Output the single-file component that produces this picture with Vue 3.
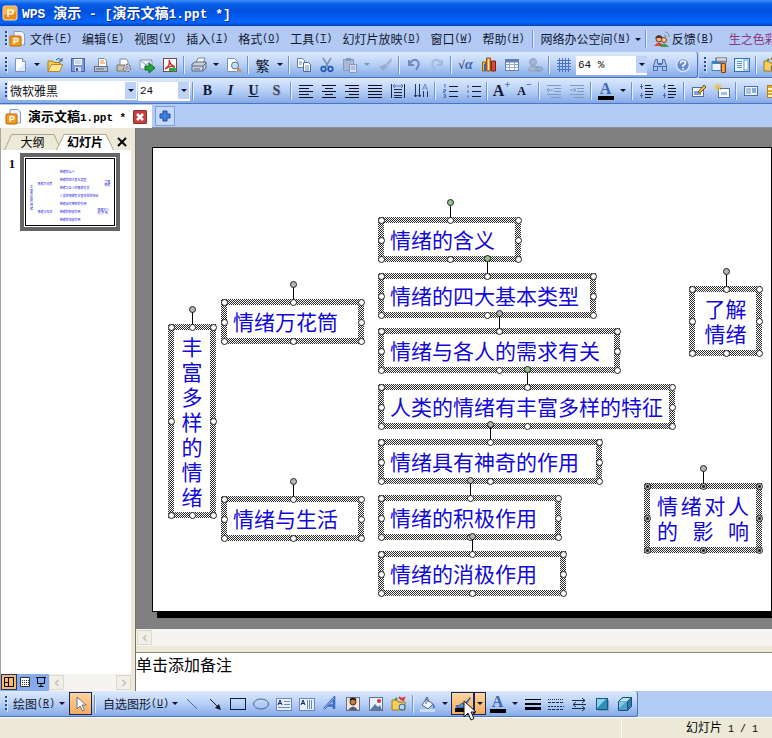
<script setup>
const icons = {
  logo: '<rect x="1" y="1" width="14" height="14" rx="2" fill="#f08a10" stroke="#ffe3a8"/><path d="M2 2h12v5q-6 0-12 3z" fill="#ffb545"/><path d="M6 12V5h3.200q2 0 2 2t-2 2H6" fill="none" stroke="#fff" stroke-width="1.600"/>',
  doc: '<path d="M5 .5h8l2.500 2.500v11H5z" fill="#eef4ff" stroke="#8a9ab8"/><rect x="1" y="5" width="11" height="10" rx="1" fill="#f49a18" stroke="#b96a08"/><path d="M5 13V7.500h2.500q1.500 0 1.500 1.500t-1.500 1.500H5" fill="none" stroke="#fff" stroke-width="1.300"/>',
  fresh: '<path d="M3.500 1.500h7l3 3v10h-10z" fill="#fdfeff" stroke="#7f93b8"/><path d="M10.500 1.500v3h3" fill="#c9d8f0" stroke="#7f93b8"/><path d="M4 14l9-8v8z" fill="#dce8fa"/>',
  open: '<path d="M1 14V4h5l1 1.500h6V8" fill="#f5c95a" stroke="#a87d1c"/><path d="M1 14.500L4.500 7.500H16l-3.500 7z" fill="#ffe596" stroke="#b58a25"/><path d="M9 3q3-3 5.500.5M15 1v3h-3" fill="none" stroke="#39537f"/>',
  save: '<rect x="1.500" y="1.500" width="13" height="13" fill="#7c97e0" stroke="#4b64ac"/><rect x="4" y="2" width="8" height="6" fill="#f2f6ff"/><path d="M5 4h6M5 6h6" stroke="#a4b4d8"/><rect x="5" y="10" width="6" height="4.500" fill="#cfdaf2"/><rect x="6" y="11" width="2" height="3" fill="#3a529c"/>',
  saveas: '<path d="M5.500 1.500h6l2 2v6h-8z" fill="#fff" stroke="#7c86a0"/><path d="M7 4h4M7 6h5" stroke="#e58b2b"/><rect x="1.500" y="9.500" width="13" height="5" fill="#b9c1d0" stroke="#656f85"/><path d="M3 12h8" stroke="#5a6480"/>',
  gear: '<path d="M4 2h6l2 2v5H4z" fill="#fff" stroke="#7c86a0"/><path d="M1 8h8v6H1z" fill="#c8c0a8" stroke="#7d765f"/><circle cx="11" cy="11" r="3.500" fill="#d9dde6" stroke="#6b7385" stroke-width="1.500" stroke-dasharray="2 1"/><circle cx="11" cy="11" r="1.300" fill="#fff" stroke="#6b7385"/>',
  send: '<path d="M1 3h12v9H1z" fill="#f1f6ff" stroke="#8597b8"/><path d="M1 3l6 5 6-5" fill="none" stroke="#8597b8"/><path d="M6 9h4V6l6 5-6 5V13H6z" fill="#22a43c" stroke="#0d6c20"/>',
  pdf: '<rect x="1.500" y="1.500" width="13" height="13" fill="#fff" stroke="#6c4a50"/><path d="M7 3q2 5-4 9 5-4 10-2Q8 8 7 3" fill="none" stroke="#d22" stroke-width="1.400"/><path d="M7 11h4V9l4 3.500-4 3V14H7z" fill="#29a83f"/>',
  print: '<path d="M5 6l2-5h7l-2 5z" fill="#fff" stroke="#7b879e"/><path d="M1 7l3-2h11v6l-3 3H1z" fill="#c9d0dd" stroke="#5b667d"/><path d="M1 9h11l3-3M12 9v5M3 12h6" fill="none" stroke="#5b667d"/>',
  preview: '<path d="M1.500 1.500h7l3 3v10h-10z" fill="#fbfdff" stroke="#7f93b8"/><circle cx="9" cy="8.500" r="3.500" fill="#bfe0fb" stroke="#54779f"/><path d="M11.500 11l3.500 3.500" stroke="#d48d36" stroke-width="2.200"/>',
  copy: '<path d="M1.500 1.500h5l2 2v7h-7z" fill="#fff" stroke="#6b7fa8"/><path d="M7.500 5.500h5l2 2v7h-7z" fill="#fff" stroke="#52699a"/><path d="M3 5h3M3 7h3M9 9h4M9 11h4M9 13h4" stroke="#6f8ec6"/>',
  cut: '<path d="M4 1l5.500 9M12 1L6.500 10" stroke="#8191b0" stroke-width="1.600"/><circle cx="4.500" cy="12" r="2.300" fill="none" stroke="#1f58b8" stroke-width="1.700"/><circle cx="11.500" cy="12" r="2.300" fill="none" stroke="#1f58b8" stroke-width="1.700"/>',
  paste: '<rect x="1.500" y="2.500" width="10" height="11" fill="#a8b9d6" stroke="#8799ba"/><rect x="4" y="1" width="5" height="3" fill="#8799ba"/><path d="M7.500 7.500h7v8h-7z" fill="#d4e0f4" stroke="#8799ba"/><path d="M9 10h4M9 12h4" stroke="#8799ba"/>',
  brush: '<path d="M14 1L9 7l2 2 4-6z" fill="#9db2d6"/><path d="M2 10l6-3 3 3-5 4z" fill="#9aacce"/>',
  undo: '<path d="M3 3v5h5M4 7q3-6 7-3.500t-1 9.500" fill="none" stroke="#6f88c6" stroke-width="2"/>',
  redo: '<path d="M13 3v5H8M12 7Q9 1 5 3.500t1 9.500" fill="none" stroke="#a3b8dd" stroke-width="2"/>',
  chart: '<path d="M1.500 5h3v9h-3z" fill="#f0c030" stroke="#866315"/><path d="M5.500 1h4v13h-4z" fill="#f59a35" stroke="#975214"/><path d="M10.500 4h4v10h-4z" fill="#dd4a35" stroke="#7c2218"/><path d="M7 2h1v11H7z" fill="#fff0b8"/><path d="M3 7h2v7H3z" fill="#3d69c4"/>',
  table: '<rect x="1.500" y="2.500" width="13" height="11" fill="#fff" stroke="#5f7fb8"/><path d="M2 4h12" stroke="#5f7fb8" stroke-width="3"/><path d="M5.500 5v8M10.500 5v8M2 7.500h12M2 10.500h12" stroke="#91a9d0"/>',
  people: '<circle cx="6" cy="5" r="3.500" fill="#a5b6d2" stroke="#8c9fbe"/><path d="M2 14q-1-5 4-5t6 3v2z" fill="#a5b6d2" stroke="#8c9fbe"/><ellipse cx="12" cy="12" rx="3" ry="2" fill="none" stroke="#8c9fbe" stroke-width="1.500"/>',
  grid: '<path d="M1 3.500h14M1 6.500h14M1 9.500h14M1 12.500h14M3.500 1v14M6.500 1v14M9.500 1v14M12.500 1v14" stroke="#4773c0"/>',
  find: '<path d="M3.500 2.500h2v4h5v-4h2l2 6v5h-4v-4h-5v4h-4v-5z" fill="#a9c3ef" stroke="#4a6cab"/><path d="M1.500 9.500h4M10.500 9.500h4M6 7.500h4" stroke="#4a6cab"/>',
  help: '<circle cx="8" cy="8" r="6.500" fill="#6689d6" stroke="#d9e4fb" stroke-width="1.500"/><path d="M5.500 6.500q0-2.500 2.500-2.500t2.500 2q0 1.500-2.500 2.500v1.200M8 11v1.500" fill="none" stroke="#fff" stroke-width="1.700"/>',
  pane: '<path d="M1 4.500h9v9H1z" fill="#e8f4ff" stroke="#3c84c4"/><path d="M1 5h9v2H1z" fill="#3c84c4"/><path d="M5 1h11v4H5z" fill="#b9bcc4" stroke="#555d70"/><path d="M6 2h9" stroke="#fff"/><path d="M10.500 6.500h4v9h-4z" fill="#f28a20" stroke="#8a3d08"/><path d="M12 7v8" stroke="#ffc878"/>',
  layout: '<rect x=".5" y="1.500" width="15" height="13" fill="#eaf6ff" stroke="#2a73b8"/><path d="M3 4.500h5M3 6.500h5M3 8.500h5M3 10.500h5" stroke="#5c8fc4"/><rect x="10" y="3" width="4" height="10" fill="#fff" stroke="#6b98c6"/>',
  folder: '<path d="M1 4h5l1 2h7v8H1z" fill="#f7cf57" stroke="#a4791a"/><path d="M8 1l2 2 3-1-1 3" fill="none" stroke="#e03a30" stroke-width="2"/><path d="M4 4l2-2" stroke="#28a03c" stroke-width="2"/><circle cx="11" cy="11" r="3" fill="#b4d7f5" stroke="#35639c"/>',
  left: '<path d="M1 2.500h14M1 5.500h10M1 8.500h14M1 11.500h10M1 14.500h14" stroke="#0a1020"/>',
  center: '<path d="M1 2.500h14M4 5.500h8M1 8.500h14M4 11.500h8M1 14.500h14" stroke="#0a1020"/>',
  right: '<path d="M1 2.500h14M5 5.500h10M1 8.500h14M5 11.500h10M1 14.500h14" stroke="#0a1020"/>',
  justify: '<path d="M1 2.500h14M1 5.500h14M1 8.500h14M1 11.500h14M1 14.500h14" stroke="#0a1020"/>',
  spread: '<path d="M1.500 1v14M14.500 1v14M4 6.500h8M4 9.500h8M4 12.500h8M4 14.500h8" stroke="#1c2740"/><path d="M3 3h10M5 1L3 3l2 2M11 1l2 2-2 2" fill="none" stroke="#5575b8"/>',
  vertical: '<path d="M2.500 1v13M6.500 1v13M10.500 8v6M14.500 8v6M1 12l1.500 2L4 12M5 12l1.500 2L8 12" fill="none" stroke="#26365c"/><path d="M9.500 7L12 1l2.500 6M10 5h4" fill="none" stroke="#6a8ad0"/>',
  numbers: '<path d="M7 3.500h9M7 8.500h9M7 13.500h9" stroke="#111a30"/><path d="M2 1.500h1v3M1.500 6.500h2v1.500h-2v1.500h2M1.500 11.500h2v3h-2M2 13h1.500" fill="none" stroke="#4b6eb6"/>',
  bullets: '<path d="M7 3.500h9M7 8.500h9M7 13.500h9" stroke="#111a30"/><path d="M2 3.500h2M2 8.500h2M2 13.500h2" stroke="#6f87ba" stroke-width="2"/>',
  outdent: '<path d="M1 2.500h14M8 5.500h7M8 8.500h7M1 11.500h14M5 14.500h10" stroke="#8397bc"/><path d="M7 7H1M3 5L1 7l2 2" fill="none" stroke="#8397bc"/>',
  indent: '<path d="M1 2.500h14M8 5.500h7M8 8.500h7M1 11.500h14M5 14.500h10" stroke="#8397bc"/><path d="M1 7h6M5 5l2 2-2 2" fill="none" stroke="#8397bc"/>',
  spacing: '<path d="M6 2.500h6M6 5.500h8M6 8.500h8M6 11.500h8M6 14.500h6" stroke="#0e1629"/><path d="M2.500 1v5M1 3.500h3M2.500 10v5M1 12.500h3" stroke="#4a66a5"/>',
  edit: '<rect x="1.500" y="4.500" width="11" height="9" fill="#fff" stroke="#4f6ca4"/><rect x="3" y="8" width="7" height="4" fill="#7da0dd"/><path d="M7 9l6-7 2 2-6 6z" fill="#f4bd35" stroke="#73531a"/>',
  newslide: '<rect x="4.500" y="5.500" width="11" height="9" fill="#fff" stroke="#54719f"/><rect x="7" y="9" width="6" height="3" fill="#9bbbe8"/><path d="M4 0v8M0 4h8M1 1l6 6M7 1L1 7" stroke="#f4b92c"/>',
  slide: '<rect x="1.500" y="3.500" width="13" height="9" fill="#eff6ff" stroke="#4872b2"/><path d="M3 6h5M3 8h5M3 10h5" stroke="#7190be"/><rect x="9" y="5" width="4" height="5" fill="#88afe4"/>',
  cells: '<rect x="1.500" y="2.500" width="13" height="12" fill="#fff6d0" stroke="#b98014"/><path d="M2 4h12M8 4v10M2 8h12M2 11h12" stroke="#e2a51c" stroke-width="2"/>',
  feedback: '<circle cx="5" cy="8" r="3" fill="#f0b27a" stroke="#6b351c"/><path d="M1 7q4-6 8 0" fill="#55301a"/><path d="M0 15q5-7 10 0z" fill="#d74432"/><circle cx="10" cy="9" r="2.500" fill="#f6c896" stroke="#7a3c1c"/><path d="M6 16q4-7 9 0z" fill="#3f9c42"/><path d="M10 4q2 0 2 2M11 1q4 0 4 5" stroke="#7c8796" fill="none"/>',
  pointer: '<path d="M4 1v12l3-3 2.500 5 2-1-2.500-5h4z" fill="#fff" stroke="#66708c"/>',
  line: '<path d="M3 3l10 10" stroke="#4a659b"/>',
  arrow: '<path d="M3 3l8 8" stroke="#10182c"/><path d="M14 14l-6-2 4-4z" fill="#10182c"/>',
  rect: '<rect x=".5" y="2.500" width="15" height="11" fill="none" stroke="#101c38"/>',
  ellipse: '<ellipse cx="8" cy="8" rx="7.500" ry="5" fill="none" stroke="#50658c"/>',
  textbox: '<rect x=".5" y="2.500" width="15" height="12" fill="#e5efff" stroke="#6d88bb"/><path d="M2 9l2-5 2 5M3 7.500h2" fill="none" stroke="#15264c"/><path d="M8 5.500h6M8 8.500h6M2 11.500h12" stroke="#6d88bb"/>',
  vtextbox: '<rect x=".5" y="2.500" width="15" height="12" fill="#e5efff" stroke="#6d88bb"/><path d="M2 9l2-5 2 5M3 7.500h2" fill="none" stroke="#15264c"/><path d="M8.500 4v9M10.500 4v9M12.500 4v9" stroke="#6d88bb"/>',
  wordart: '<path d="M2 13L12 2v11M5 9.500h7" fill="none" stroke="#3f6cc4" stroke-width="2.600"/><path d="M2 13L12 2" stroke="#9dbcf0"/>',
  clipart: '<rect x="1.500" y="1.500" width="13" height="13" fill="#f4e7dc" stroke="#62708e"/><circle cx="8" cy="6" r="3" fill="#c87b3f" stroke="#4d2b18"/><path d="M3 14q5-7 10 0z" fill="#52607c"/><path d="M5 4q3-3 6 0" stroke="#2a1811" stroke-width="2" fill="none"/>',
  picture: '<rect x="1.500" y="1.500" width="13" height="13" fill="#e8f2ff" stroke="#62708e"/><path d="M2 14l5-6 3 3 2-2 2 5z" fill="#5878a8"/><circle cx="11" cy="5" r="2" fill="#cf3c2c"/>',
  fill: '<path d="M6 3l7 5-5 5-6-4z" fill="#eef4ff" stroke="#4e6384"/><path d="M6 8V2q1-2 2 0v4" fill="none" stroke="#4e6384"/><path d="M13 8q3 2 1 5-2-2-1-5" fill="#396fbc"/><rect x="0" y="13" width="15" height="3" fill="#c9def5"/>',
  paint: '<path d="M15 1l-6 7 2 1 5-7z" fill="#2f65b9"/><path d="M1 10q4 0 6-3l4 2q-3 4-10 2z" fill="#5d94d8" stroke="#2d5793"/><rect x="0" y="12" width="15" height="4" fill="#080808"/>',
  weights: '<path d="M0 3.500h16" stroke="#000"/><path d="M0 8h16" stroke="#000" stroke-width="2"/><path d="M0 12.500h16" stroke="#000" stroke-width="3"/>',
  dashes: '<path d="M0 3.500h16" stroke="#1c2948" stroke-dasharray="1 1"/><path d="M0 6.500h16M0 13.500h16" stroke="#1c2948" stroke-dasharray="3 1"/><path d="M0 10.500h16" stroke="#1c2948" stroke-dasharray="2 1"/>',
  arrows: '<path d="M1 4.500h13M2 8.500h13M1 12.500h13M11 2l3 2.500-3 2.500M5 6L2 8.500 5 11M11 10l3 2.500-3 2.500" fill="none" stroke="#1a2848"/>',
  shadow: '<rect x="4" y="4" width="11" height="11" fill="#7d9ad0"/><rect x="2.500" y="2.500" width="11" height="11" fill="#2f8fb8" stroke="#1c5578"/><path d="M3 3h9L3 12z" fill="#8bd2ea"/>',
  cube: '<path d="M1.500 5.500l4-4h9v9l-4 4h-9z" fill="#2d7ba8" stroke="#1b4e72"/><path d="M2 5.500l4-3.500h8l-4 3.500z" fill="#b8e5f4"/><path d="M2 6h8v8H2z" fill="#4f9fca"/><path d="M2 6h7l-7 6z" fill="#83c8e4"/><path d="M10.500 5.500v9M10.500 5.500l4-4" stroke="#1b4e72"/>'
}

const menus = [['文件', 'F'], ['编辑', 'E'], ['视图', 'V'], ['插入', 'I'], ['格式', 'O'], ['工具', 'T'], ['幻灯片放映', 'D'], ['窗口', 'W'], ['帮助', 'H']]

const standard = ['fresh', 'v', 'open', 'save', 'saveas', 'gear', 'send', 'pdf', '|', 'print', 'v', 'preview', '|', '#繁', 'v', '|', 'copy', 'cut', 'paste', 'v-', 'brush', '|', 'undo', 'redo', '|', '#√α', 'chart', 'table', 'people', '|', 'grid']
const formatting = ['#B', '#I', '#U', '#S', '|', 'left', 'center', 'right', 'justify', 'spread', 'vertical', '|', 'numbers', 'bullets', '|', '#A+', '#A-', '|', 'outdent', 'indent', '|', '#A', 'v', '|', 'spacing', 'spacing', '|', 'edit', 'newslide', '|', 'slide', 'cells']
const drawing = ['line', 'arrow', 'rect', 'ellipse', 'textbox', 'vtextbox', 'wordart', 'clipart', 'picture', 'folder', '|', 'fill', 'v']
const drawingEnd = ['#A', 'v', 'weights', 'dashes', 'arrows', 'shadow', 'cube']

const glyphClass = { '#繁': 'g-fan', '#√α': 'g-root', '#B': 'g-b', '#I': 'g-i', '#U': 'g-u', '#S': 'g-s', '#A+': 'g-up', '#A-': 'g-down', '#A': 'g-color' }

// Positions are in slide coordinates: the rectangle joins the corner handles.
const shapes = [
  { x: 228, y: 72, w: 137, h: 39, lines: ['情绪的含义'], green: true },
  { x: 228, y: 128, w: 212, h: 39, lines: ['情绪的四大基本类型'], green: true },
  { x: 228, y: 183, w: 236, h: 39, lines: ['情绪与各人的需求有关'] },
  { x: 228, y: 239, w: 291, h: 39, lines: ['人类的情绪有丰富多样的特征'], green: true },
  { x: 228, y: 294, w: 218, h: 39, lines: ['情绪具有神奇的作用'] },
  { x: 228, y: 350, w: 177, h: 39, lines: ['情绪的积极作用'] },
  { x: 228, y: 406, w: 182, h: 39, lines: ['情绪的消极作用'] },
  { x: 71, y: 154, w: 137, h: 39, lines: ['情绪万花筒'] },
  { x: 71, y: 351, w: 137, h: 39, lines: ['情绪与生活'] },
  { x: 18, y: 179, w: 42, h: 188, lines: [...'丰富多样的情绪'], kind: 'mid' },
  { x: 539, y: 141, w: 67, h: 64, lines: ['了解', '情绪'], kind: 'mid' },
  { x: 494, y: 338, w: 112, h: 64, lines: ['情绪对人', '的 影 响'], kind: 'wide', plus: true }
]
const handles = ['tl', 'tc', 'tr', 'ml', 'mr', 'bl', 'bc', 'br']
const lineY = (s, i) => s.y + s.h / 2 + (i - (s.lines.length - 1) / 2) * 25 + 8
</script>

<template>
  <div class="app">
    <header class="title">
      <svg class="ico" viewBox="0 0 16 16" v-html="icons.logo"></svg>
      <h1><span class="en">WPS </span>演示<span class="en"> - [</span>演示文稿<span class="en">1.ppt *]</span></h1>
    </header>

    <nav class="menu">
      <i class="grip"></i>
      <svg class="ico doc" viewBox="0 0 16 16" v-html="icons.doc"></svg>
      <button v-for="m in menus" :key="m[1]" class="mi">{{ m[0] }}<span class="key">(<u>{{ m[1] }}</u>)</span></button>
      <i class="sep"></i>
      <button class="mi net">网络办公空间<span class="key">(<u>N</u>)</span><i class="tri"></i></button>
      <i class="sep"></i>
      <button class="mi fb"><svg class="ico" viewBox="0 0 16 16" v-html="icons.feedback"></svg>反馈<span class="key">(<u>B</u>)</span></button>
      <a class="promo" href="#">生之色彩</a>
    </nav>

    <div class="dock">
      <div class="bar round">
        <i class="grip"></i>
        <template v-for="(t, i) in standard" :key="i">
          <i v-if="t === '|'" class="sep"></i>
          <button v-else-if="t[0] === 'v'" class="dd" :class="{ off: t === 'v-' }" aria-label="更多"><i class="tri"></i></button>
          <button v-else-if="t[0] === '#'" class="tb" :class="glyphClass[t]"><template v-if="t === '#√α'">√<em>α</em></template><template v-else>{{ t.slice(1) }}</template></button>
          <button v-else class="tb" :aria-label="t"><svg class="ico" viewBox="0 0 16 16" v-html="icons[t]"></svg></button>
        </template>
        <label class="combo zoom"><select aria-label="显示比例"><option>64 %</option></select><i class="drop"><i class="tri"></i></i></label>
        <button class="tb" aria-label="查找"><svg class="ico" viewBox="0 0 16 16" v-html="icons.find"></svg></button>
        <button class="tb" aria-label="帮助"><svg class="ico" viewBox="0 0 16 16" v-html="icons.help"></svg></button>
      </div>
      <div class="bar grow">
        <i class="grip"></i>
        <button class="tb" aria-label="pane"><svg class="ico" viewBox="0 0 16 16" v-html="icons.pane"></svg></button>
        <button class="tb" aria-label="layout"><svg class="ico" viewBox="0 0 16 16" v-html="icons.layout"></svg></button>
        <i class="sep"></i>
        <button class="tb" aria-label="folder"><svg class="ico" viewBox="0 0 16 16" v-html="icons.folder"></svg></button>
      </div>
    </div>

    <div class="dock">
      <div class="bar grow">
        <i class="grip"></i>
        <label class="combo font"><select aria-label="字体"><option>微软雅黑</option></select><i class="drop"><i class="tri"></i></i></label>
        <label class="combo size"><select aria-label="字号"><option>24</option></select><i class="drop"><i class="tri"></i></i></label>
        <i class="sep"></i>
        <template v-for="(t, i) in formatting" :key="i">
          <i v-if="t === '|'" class="sep"></i>
          <button v-else-if="t === 'v'" class="dd" aria-label="更多"><i class="tri"></i></button>
          <button v-else-if="t[0] === '#'" class="tb" :class="glyphClass[t]">{{ t[1] }}<sup v-if="t[2]">{{ t[2] === '-' ? '−' : t[2] }}</sup></button>
          <button v-else class="tb" :aria-label="t"><svg class="ico" viewBox="0 0 16 16" v-html="icons[t]"></svg></button>
        </template>
      </div>
    </div>

    <div class="files">
      <div class="file">
        <svg class="ico" viewBox="0 0 16 16" v-html="icons.doc"></svg>
        <span class="name">演示文稿<span class="en">1.ppt *</span></span>
        <button class="close" aria-label="关闭"><svg viewBox="0 0 14 14"><path d="M4 4l6 6M10 4l-6 6" stroke="#fff" stroke-width="2.500" /></svg></button>
      </div>
      <button class="add" aria-label="新建"><svg viewBox="0 0 14 14"><path d="M5 2h4v3h3v4H9v3H5V9H2V5h3z" fill="#3f80e0" stroke="#1c4ca4" /></svg></button>
    </div>

    <main class="work">
      <aside class="side">
        <div class="tabs">
          <button class="tab outline"><svg viewBox="0 0 57 16" preserveAspectRatio="none"><path d="M.5 16L7.500 .5H50L57 16" fill="#ece9d8" stroke="#aaa794" /></svg><span>大纲</span></button>
          <button class="tab active"><svg viewBox="0 0 58 16" preserveAspectRatio="none"><path d="M.5 16L8 .5H50L57.500 16" fill="#fff" stroke="#aaa794" /></svg><span>幻灯片</span></button>
          <button class="x" aria-label="关闭"><svg viewBox="0 0 10 10"><path d="M1 1l8 8M9 1L1 9" stroke="#000" stroke-width="2" /></svg></button>
        </div>
        <div class="slides">
          <span class="num">1</span>
          <div class="thumb">
            <svg viewBox="0 0 620 465">
              <template v-for="(s, k) in shapes" :key="k">
                <text v-for="(l, i) in s.lines" :key="i" :x="s.x + (s.kind === 'mid' ? s.w / 2 : 10)" :y="lineY(s, i)" :text-anchor="s.kind === 'mid' ? 'middle' : 'start'">{{ l }}</text>
              </template>
            </svg>
          </div>
        </div>
        <div class="views">
          <button class="view on" aria-label="普通视图"><svg viewBox="0 0 12 12"><path d="M1.500 1.500h9v9h-9zM5.500 1.500v9M1.500 6.500h4" fill="none" stroke="#000" /></svg></button>
          <button class="view" aria-label="浏览视图"><svg viewBox="0 0 12 12"><path d="M1.500 1.500h9v9h-9z" fill="#fff" stroke="#333" /><path d="M3 4.500h7M3 6.500h7M3 8.500h7" stroke="#333" stroke-dasharray="1 1" /></svg></button>
          <button class="view" aria-label="放映"><svg viewBox="0 0 12 12"><path d="M1 1.500h10M2.500 1.500v6h7v-6M6 8v2M3.500 10.500h5" fill="none" stroke="#000" /></svg></button>
          <div class="scroll"><button aria-label="向左"><svg viewBox="0 0 8 8"><path d="M5.500 1l-3 3 3 3" fill="none" stroke="#c3c0b2" stroke-width="1.500" /></svg></button><button aria-label="向右"><svg viewBox="0 0 8 8"><path d="M2.500 1l3 3-3 3" fill="none" stroke="#c3c0b2" stroke-width="1.500" /></svg></button></div>
        </div>
      </aside>

      <section class="editor">
        <div class="canvas">
          <div class="slide">
            <div v-for="(s, k) in shapes" :key="k" class="shape" :class="[s.kind, { plus: s.plus, green: s.green }]" :style="{ left: s.x + 'px', top: s.y + 'px', width: s.w + 'px', height: s.h + 'px' }">
              <div class="words"><p v-for="(l, i) in s.lines" :key="i">{{ l }}</p></div>
              <i class="stem"></i>
              <i v-for="h in handles" :key="h" class="h" :class="h"></i>
              <i class="h rot"></i>
            </div>
          </div>
        </div>
        <div class="scroll hs"><button aria-label="向左"><svg viewBox="0 0 8 8"><path d="M5.500 1l-3 3 3 3" fill="none" stroke="#c3c0b2" stroke-width="1.500" /></svg></button></div>
        <div class="notes">单击添加备注</div>
      </section>
    </main>

    <div class="dock draw">
      <div class="bar round">
        <i class="grip"></i>
        <button class="mi">绘图<span class="key">(<u>R</u>)</span><i class="tri"></i></button>
        <button class="tb hot" aria-label="选择"><svg class="ico" viewBox="0 0 16 16" v-html="icons.pointer"></svg></button>
        <i class="sep"></i>
        <button class="mi auto">自选图形<span class="key">(<u>U</u>)</span><i class="tri"></i></button>
        <template v-for="(t, i) in drawing" :key="i">
          <i v-if="t === '|'" class="sep"></i>
          <button v-else-if="t === 'v'" class="dd" aria-label="更多"><i class="tri"></i></button>
          <button v-else class="tb" :aria-label="t"><svg class="ico" viewBox="0 0 16 16" v-html="icons[t]"></svg></button>
        </template>
        <button class="tb hot" aria-label="线条颜色">
          <svg class="ico" viewBox="0 0 16 16" v-html="icons.paint"></svg>
          <svg class="mouse" viewBox="0 0 13 21"><path d="M1 1v16l4-4 3 7 3-1.500-3-6.500h5z" fill="#fff" stroke="#111" /></svg>
        </button>
        <button class="dd hot" aria-label="更多"><i class="tri"></i></button>
        <template v-for="(t, i) in drawingEnd" :key="'e' + i">
          <button v-if="t === 'v'" class="dd" aria-label="更多"><i class="tri"></i></button>
          <button v-else-if="t === '#A'" class="tb g-color">A</button>
          <button v-else class="tb" :aria-label="t"><svg class="ico" viewBox="0 0 16 16" v-html="icons[t]"></svg></button>
        </template>
      </div>
    </div>

    <footer class="status"><span class="cell">幻灯片<span class="en"> 1 / 1</span></span></footer>
  </div>
</template>

<style>
body { margin: 0; overflow: hidden; }
</style>

<style scoped>
.app { display: flex; flex-direction: column; min-height: 100vh; overflow: hidden; background: #b4cbf3; font: 12px/16px "Noto Sans CJK SC", sans-serif; color: #101830; }
.app *, .app *::before, .app *::after { box-sizing: border-box; }
button { margin: 0; padding: 0; border: 0; background: none; font: inherit; color: inherit; }
i { font-style: normal; }
svg { display: block; }
.en, .key { font-family: "Liberation Mono", monospace; font-size: 10px; white-space: pre; }
.ico { width: 16px; height: 16px; flex: none; }

.title { display: flex; align-items: center; gap: 4px; height: 26px; padding-left: 2px; background: linear-gradient(#3f8df8, #0a5fe8 15%, #0050dc 40%, #0566fc 85%, #0040c0); color: #fff; }
.title h1 { margin: 0; font-size: 14px; line-height: 20px; font-weight: 700; white-space: nowrap; text-shadow: 1px 1px #0a2f90; }
.title .en { font-size: 13px; }

.menu { display: flex; align-items: center; height: 26px; background: #b2c9f4; white-space: nowrap; overflow: hidden; }
.menu .doc { margin: 0 5px 0 1px; }
.mi { display: flex; align-items: center; flex: none; margin-right: 10px; }
.menu .mi:has(+ .sep) { margin-right: 5px; }
.menu .sep { margin-right: 5px; }
.menu .mi .tri { margin-left: 4px; }
.menu .net:has(+ .sep) { margin-right: 2px; }
.menu .fb { margin-right: 15px; }
.menu .fb .ico { margin-right: 2px; }
.promo { color: #8a3878; text-decoration: none; }
.grip { flex: none; width: 3px; height: 16px; margin: 0 0 0 5px; background: repeating-linear-gradient(#2c4a90 0 2px, transparent 2px 4px); border-right: 1px solid #d6e4fb; }
.sep { flex: none; width: 6px; height: 18px; background: linear-gradient(90deg, transparent 2px, #6f93d6 2px 3px, #e4eefd 3px 4px, transparent 4px); }
.tri { display: block; flex: none; width: 0; height: 0; border: 3px solid transparent; border-top-color: #0c1430; border-bottom: 0; }
.off .tri { border-top-color: #7f95bf; }

.dock { display: flex; height: 26px; flex: none; background: #b4cbf3; }
.bar { display: flex; align-items: center; flex: none; background: linear-gradient(#dce9fd, #bcd3f7 45%, #85aae8); border-bottom: 1px solid #4c74c0; }
.bar.grow { flex: 1 1 0; overflow: hidden; }
.bar.round { border-right: 1px solid #4c74c0; border-radius: 0 3px 3px 0; padding-right: 3px; margin-right: 1px; }
.tb { position: relative; flex: none; display: flex; align-items: center; justify-content: center; width: 23px; height: 23px; }
.dd { flex: none; display: flex; align-items: center; justify-content: center; width: 12px; height: 23px; }
.combo { position: relative; flex: none; height: 19px; }
.combo select { appearance: none; width: 100%; height: 19px; padding: 0 2px; border: 0; border-radius: 0; background: #fff; color: #101018; font: 12px/19px "Noto Sans CJK SC", sans-serif; }
.combo .drop { position: absolute; right: 1px; top: 1px; width: 11px; height: 17px; display: flex; align-items: center; justify-content: center; background: #bdd2f6; pointer-events: none; }
.combo.zoom { width: 73px; padding: 0 1px; }
.combo.zoom select, .combo.size select { font-family: "Liberation Mono", monospace; font-size: 11px; }
.combo.font { width: 129px; }
.combo.size { width: 52px; margin-left: 1px; }

.g-fan { font-size: 14px; }
.g-root { font-size: 12px; font-weight: 700; font-family: "Liberation Serif", serif; }
.g-root em { color: #3a62b4; font-size: 14px; }
.g-b, .g-i, .g-u, .g-s, .g-up, .g-down, .g-color { font-family: "Liberation Serif", serif; font-weight: 700; font-size: 14px; }
.g-i { font-style: italic; }
.g-u { text-decoration: underline; }
.g-s { color: #3a4256; text-shadow: 1px 1px #9aa8c8; }
.g-up { font-size: 16px; }
.g-down { font-size: 12px; }
.g-up sup, .g-down sup { align-self: flex-start; font-size: 10px; line-height: 12px; color: #3a62b4; }
.g-color { font-size: 16px; line-height: 14px; color: #4066b0; align-items: flex-start; padding-top: 3px; }
.g-color::after { content: ""; position: absolute; left: 4px; right: 3px; bottom: 2px; height: 4px; background: #000; }

.files { display: flex; align-items: flex-start; height: 24px; background: #b4cbf3; border-bottom: 1px solid #8a8f98; padding-top: 1px; }
.file { display: flex; align-items: center; height: 23px; padding: 0 5px 0 5px; gap: 7px; background: #fff; }
.name { font-size: 13px; font-weight: 700; color: #000; white-space: nowrap; }
.name .en { font-size: 11px; }
.close { width: 14px; height: 14px; border-radius: 2px; background: #c8403c; box-shadow: 0 0 0 1px #8c2c30 inset; }
.add { display: flex; align-items: center; justify-content: center; width: 20px; height: 20px; margin: 1px 0 0 3px; border: 1px solid #7f9fdc; background: #c6d9fa; }
.add svg { width: 14px; }

.work { flex: 1; display: flex; min-height: 0; background: #ece9d8; }
.side { flex: none; display: flex; flex-direction: column; width: 131px; border-left: 1px solid #a5a5a0; }
.tabs { display: flex; align-items: flex-end; height: 22px; padding-left: 3px; }
.tab { position: relative; width: 57px; height: 16px; }
.tab svg { position: absolute; inset: 0; width: 100%; height: 100%; }
.tab span { position: relative; line-height: 15px; color: #000; }
.tab.active { width: 58px; margin-left: -5px; font-weight: 700; }
.x { align-self: flex-end; width: 10px; height: 10px; margin: 0 0 3px 3px; }
.slides { flex: 1; display: flex; align-items: flex-start; background: #fff; padding: 3px 0 0 8px; gap: 5px; }
.num { width: 6px; padding-top: 3px; font: 700 12px/16px "Liberation Serif", serif; color: #000; }
.thumb { width: 100px; padding: 1px; border: 4px solid #666; }
.thumb svg { width: 100%; height: auto; border: 1px solid #000; background: #fff; }
.thumb text { font-size: 21px; fill: #2a20e0; }
.views { display: flex; height: 17px; background: #86abec; }
.view { display: flex; align-items: center; justify-content: center; width: 16px; height: 16px; }
.view svg { width: 12px; }
.view.on { background: #f9b96b; border: 1px solid #22306c; }
.scroll { display: flex; justify-content: space-between; flex: 1; background: #f5f4f0; }
.scroll button { display: flex; align-items: center; justify-content: center; width: 15px; height: 15px; margin: 1px 0; background: #f0efe8; border: 1px solid #dcd9cc; }
.scroll svg { width: 8px; }
.scroll.hs { flex: none; height: 17px; padding-left: 1px; }

.editor { flex: 1; min-width: 0; display: flex; flex-direction: column; margin-left: 4px; border-left: 1px solid #77756c; }
.canvas { flex: 1; overflow: hidden; padding: 19px 0 17px 16px; background: #808080; }
.slide { position: relative; width: 620px; aspect-ratio: 4 / 3; background: #fff; border: 1px solid #000; box-shadow: 5px 6px #000; }
.shape { position: absolute; color: #1208d8; font-size: 21px; line-height: 25px; }
.shape::before { content: ""; position: absolute; inset: -3px; background: repeating-conic-gradient(#2c2c2c 0 25%, #fff 0 50%) 0 0 / 2px 2px; }
.words { position: absolute; inset: 3px; display: flex; flex-direction: column; justify-content: center; padding-left: 6px; background: #fff; white-space: nowrap; }
.words p { margin: 0; }
.mid .words { padding: 0; align-items: center; }
.wide .words { padding: 0 7px; }
.wide p { text-align: justify; text-align-last: justify; white-space: normal; }
.h { position: absolute; width: 7px; height: 7px; margin: -3px 0 0 -3px; border: 1px solid #222; border-radius: 50%; background: #fff; }
.tl, .tc, .tr { top: 0; }
.ml, .mr { top: 50%; }
.bl, .bc, .br { top: 100%; }
.tl, .ml, .bl { left: 0; }
.tc, .bc, .rot { left: 50%; }
.tr, .mr, .br { left: 100%; }
.rot { top: -18px; background: #b5b9b5; }
.green .rot { background: #94c48c; }
.plus .h:not(.rot) { background: radial-gradient(#222 1px, #ccc 2px); }
.stem { position: absolute; left: 50%; top: -15px; width: 1px; height: 13px; background: #000; }
.notes { min-height: 39px; margin-top: 6px; background: #fff; border-top: 1px solid #8e8c80; font-size: 16px; line-height: 22px; color: #000; }

.draw { z-index: 1; }
.draw .grip { margin-right: 5px; }
.draw .mi .tri { margin-left: 4px; }
.draw .mi { margin-right: 4px; }
.draw .bar .auto { margin: 0 2px 0 5px; }
.draw .bar .auto .tri { margin-left: 3px; }
.draw .round { padding-right: 1px; }
.hot { background: linear-gradient(#fcd9a0, #f6a95a); outline: 1px solid #20205c; outline-offset: -1px; }
.mouse { position: absolute; z-index: 2; left: 12px; top: 8px; width: 13px; height: 21px; }
.status { display: flex; align-items: center; justify-content: flex-end; height: 22px; background: #ece9d8; border-top: 1px solid #fbfaf4; }
.cell { padding: 0 14px 0 64px; border-left: 1px solid #fff; color: #000; }
</style>
